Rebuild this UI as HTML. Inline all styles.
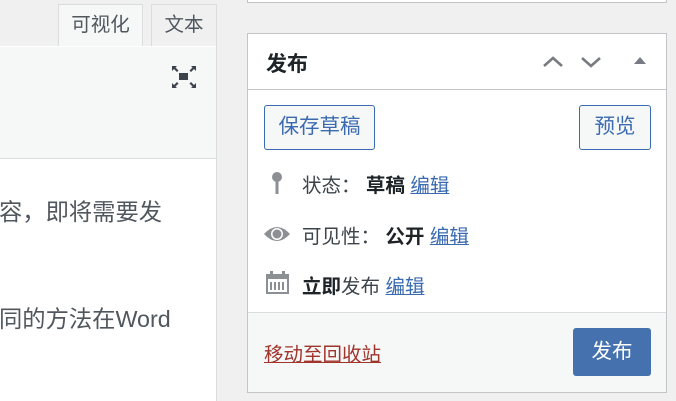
<!DOCTYPE html>
<html><head><meta charset="utf-8"><style>
*{box-sizing:border-box;margin:0;padding:0}
body{width:676px;height:401px;background:#f0f0f1;position:relative;overflow:hidden;font-family:"Liberation Sans","Noto Sans CJK SC",sans-serif;color:#3c434a}
.abs{position:absolute}
.tab{position:absolute;border:1px solid #dcdcde;border-bottom:none;font-size:19.5px;color:#50575e;text-align:center;line-height:40px}
a{color:#3a6bb0;text-decoration:underline}
.btn{position:absolute;border:1px solid #3a6bb0;border-radius:3px;background:#f6f7f7;color:#3a6bb0;font-size:20.5px;text-align:center;line-height:42px}
.row{position:absolute;left:302px;font-size:19.5px;color:#3c434a;white-space:nowrap}
</style></head><body>
<div class="tab" style="left:58px;top:4px;width:85px;height:43px;background:#f6f7f7">可视化</div>
<div class="tab" style="left:151px;top:4px;width:66px;height:42px;background:#f0f0f1">文本</div>
<div class="abs" style="left:0;top:46px;width:58px;height:1px;background:#dcdcde"></div>
<div class="abs" style="left:0;top:46px;width:217px;height:355px;background:#fff;border-right:1px solid #dcdcde"></div>
<div class="abs" style="left:0;top:47px;width:216px;height:112px;background:#f6f7f7;border-bottom:1px solid #dcdcde"></div>
<svg class="abs" style="left:171px;top:65px" width="26" height="24" viewBox="0 0 26 24">
<rect x="8" y="8" width="9" height="7" fill="#3c434a"/>
<path d="M1 1h5l-1.5 1.5 3 3-1.5 1.5-3-3L1 6zM25 1h-5l1.5 1.5-3 3 1.5 1.5 3-3L25 6zM1 23h5l-1.5-1.5 3-3-1.5-1.5-3 3L1 18zM25 23h-5l1.5-1.5-3-3 1.5-1.5 3 3L25 18z" fill="#3c434a"/>
</svg>
<div class="abs" style="left:-1px;top:193px;font-size:23.3px;color:#50575e;white-space:nowrap">容，即将需要发</div>
<div class="abs" style="left:-1px;top:300px;font-size:23.3px;color:#50575e;white-space:nowrap">同的方法在Word</div>

<div class="abs" style="left:247px;top:-5px;width:420px;height:8px;background:#fff;border:1px solid #c3c4c7"></div>
<div class="abs" style="left:247px;top:33px;width:420px;height:360px;background:#fff;border:1px solid #c3c4c7"></div>
<div class="abs" style="left:248px;top:89px;width:418px;height:1px;background:#c3c4c7"></div>
<div class="abs" style="left:266px;top:48px;font-size:21px;font-weight:bold;color:#1d2327">发布</div>
<svg class="abs" style="left:542px;top:54px" width="110" height="16" viewBox="0 0 110 16">
<path d="M2 12l9-8 9 8" stroke="#787c82" stroke-width="2.6" fill="none"/>
<path d="M40 4l9 8 9-8" stroke="#787c82" stroke-width="2.6" fill="none"/>
<path d="M92 10l6-7 6 7z" fill="#787c82"/>
</svg>
<div class="btn" style="left:264px;top:105px;width:111px;height:45px">保存草稿</div>
<div class="btn" style="left:579px;top:105px;width:72px;height:45px">预览</div>
<svg class="abs" style="left:270px;top:171px" width="14" height="24" viewBox="0 0 14 24"><circle cx="7" cy="6" r="5" fill="#8c8f94"/><rect x="5.5" y="9" width="3" height="14" fill="#8c8f94"/></svg>
<div class="row" style="top:169px">状态：&nbsp;<b style="color:#1d2327">草稿</b> <a>编辑</a></div>
<svg class="abs" style="left:263px;top:225px" width="28" height="18" viewBox="0 0 28 18"><path d="M1 9Q14-5 27 9Q14 23 1 9z" fill="#8c8f94"/><circle cx="14" cy="9" r="6" fill="#fff"/><circle cx="14" cy="9" r="4.5" fill="#8c8f94"/></svg>
<div class="row" style="top:220px">可见性：&nbsp;<b style="color:#1d2327">公开</b> <a>编辑</a></div>
<svg class="abs" style="left:265px;top:270px" width="25" height="25" viewBox="0 0 25 25"><rect x="1" y="4" width="23" height="20" fill="#8c8f94"/><rect x="3" y="9" width="19" height="13" fill="#fff"/><rect x="5" y="12" width="2" height="8" fill="#8c8f94"/><rect x="9" y="12" width="2" height="8" fill="#8c8f94"/><rect x="13" y="12" width="2" height="8" fill="#8c8f94"/><rect x="17" y="12" width="2" height="8" fill="#8c8f94"/><rect x="5" y="1" width="3" height="5" fill="#8c8f94"/><rect x="17" y="1" width="3" height="5" fill="#8c8f94"/></svg>
<div class="row" style="top:270px"><b style="color:#1d2327">立即</b>发布 <a>编辑</a></div>
<div class="abs" style="left:248px;top:312px;width:418px;height:80px;background:#f6f7f7;border-top:1px solid #dcdcde"></div>
<a class="abs" style="left:264px;top:338px;font-size:19.5px;color:#a0352c">移动至回收站</a>
<div class="abs" style="left:573px;top:328px;width:78px;height:48px;background:#4571af;border-radius:3px;color:#fff;font-size:20.5px;text-align:center;line-height:48px">发布</div>
</body></html>
